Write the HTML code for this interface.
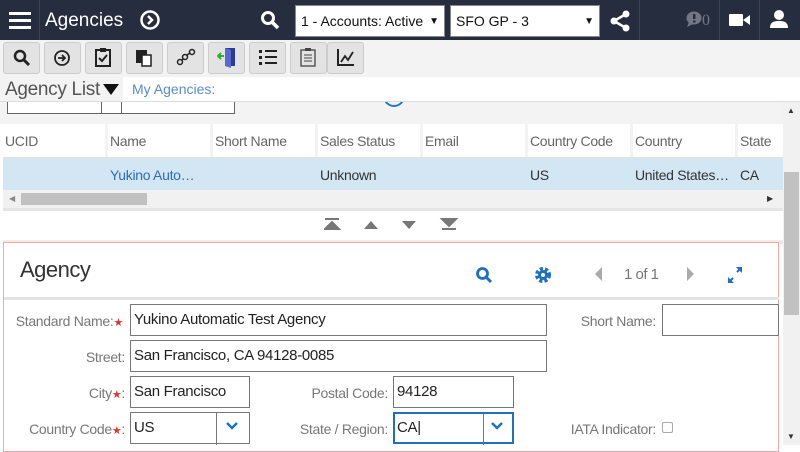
<!DOCTYPE html>
<html><head><style>
*{box-sizing:border-box;margin:0;padding:0}
body{width:800px;height:445px;overflow:hidden;background:#fff;font-family:"Liberation Sans",sans-serif;position:relative}
.a{position:absolute}
.top{left:0;top:0;width:800px;height:40px;background:#262d3e}
.sel{background:#fff;border:1px solid #888;height:32px;top:5px;font-size:14px;color:#111;padding:7px 5px}
.tb{top:40px;left:0;width:800px;height:37px;background:#f3f3f3}
.btn{top:42px;width:37px;height:32px;background:#e3e3e3;border:1px solid #ccc;border-radius:3px}
.th{font-size:14px;color:#666;top:133px;letter-spacing:-.3px}
.td{font-size:14px;color:#333;top:167px;letter-spacing:-.3px}
.lbl{font-size:14px;color:#777;text-align:right;letter-spacing:-.3px}
.inp{border:1px solid #777;height:32px;font-size:15px;color:#222;padding:6px 3px;letter-spacing:-.3px}
.star{color:#d33;font-size:11px}
</style></head><body>
<div class="a top"></div>
<div class="a" style="left:9px;top:12px;width:22px;height:3px;background:#fff;box-shadow:0 7px 0 #fff,0 14px 0 #fff"></div>
<div class="a" style="left:39px;top:0;width:1px;height:40px;background:#3c4455"></div>
<div class="a" style="left:45px;top:10px;color:#fff;font-size:19px">Agencies</div>
<svg class="a" style="left:140px;top:10px" width="20" height="20"><circle cx="10" cy="10" r="8.5" fill="none" stroke="#fff" stroke-width="2.5"/><path d="M8 6l4 4-4 4" fill="none" stroke="#fff" stroke-width="2.5"/></svg>
<svg class="a" style="left:260px;top:10px" width="20" height="20"><circle cx="8" cy="8" r="5.5" fill="none" stroke="#fff" stroke-width="3"/><path d="M12 12l6 6" stroke="#fff" stroke-width="3.5"/></svg>
<div class="a sel" style="left:295px;width:150px">1 - Accounts: Active<span style="position:absolute;right:5px;font-size:10px;top:10px">▼</span></div>
<div class="a sel" style="left:450px;width:150px">SFO GP - 3<span style="position:absolute;right:5px;font-size:10px;top:10px">▼</span></div>
<svg class="a" style="left:609px;top:10px" width="22" height="22"><circle cx="5" cy="11" r="3.5" fill="#fff"/><circle cx="17" cy="4" r="3.5" fill="#fff"/><circle cx="17" cy="18" r="3.5" fill="#fff"/><path d="M5 11L17 4M5 11l12 7" stroke="#fff" stroke-width="2.5"/></svg>
<div class="a" style="left:639px;top:0;width:1px;height:40px;background:#3c4455"></div>
<div class="a" style="left:719px;top:0;width:1px;height:40px;background:#3c4455"></div>
<div class="a" style="left:759px;top:0;width:1px;height:40px;background:#3c4455"></div>
<svg class="a" style="left:686px;top:11px" width="16" height="16"><ellipse cx="8" cy="7" rx="7.5" ry="6.5" fill="#717784"/><path d="M3 11l-2 5 6-3z" fill="#717784"/><rect x="7" y="3" width="2.5" height="5" fill="#262d3e"/><rect x="7" y="9.5" width="2.5" height="2" fill="#262d3e"/></svg>
<div class="a" style="left:702px;top:12px;color:#717784;font-size:16px;font-family:'Liberation Serif',serif">0</div>
<svg class="a" style="left:729px;top:13px" width="22" height="14"><rect x="0" y="1" width="14" height="12" rx="1" fill="#fff"/><path d="M14 7l7-5v10z" fill="#fff"/></svg>
<svg class="a" style="left:769px;top:9px" width="20" height="20"><circle cx="10" cy="6" r="5" fill="#fff"/><path d="M1 19c0-6 4-7 9-7s9 1 9 7z" fill="#fff"/></svg>
<div class="a tb"></div>
<div class="a btn" style="left:3px"></div><div class="a btn" style="left:44px"></div><div class="a btn" style="left:85px"></div><div class="a btn" style="left:126px"></div><div class="a btn" style="left:167px"></div><div class="a btn" style="left:208px"></div><div class="a btn" style="left:249px"></div><div class="a btn" style="left:290px"></div><div class="a btn" style="left:327px;width:37px"></div>
<svg class="a" style="left:13px;top:49px" width="18" height="18"><circle cx="7" cy="7" r="5" fill="none" stroke="#222" stroke-width="2.5"/><path d="M11 11l5 5" stroke="#222" stroke-width="3"/></svg>
<svg class="a" style="left:53px;top:49px" width="18" height="18"><circle cx="9" cy="9" r="7" fill="none" stroke="#222" stroke-width="1.8"/><path d="M5 9h7M9 6l3 3-3 3" fill="none" stroke="#222" stroke-width="1.8"/></svg>
<svg class="a" style="left:94px;top:47px" width="18" height="20"><rect x="2" y="3" width="14" height="16" fill="none" stroke="#222" stroke-width="2"/><rect x="6" y="1" width="6" height="4" fill="#222"/><path d="M5 11l3 3 5-6" fill="none" stroke="#222" stroke-width="2"/></svg>
<svg class="a" style="left:135px;top:47px" width="18" height="20"><rect x="1" y="3" width="11" height="13" fill="#222"/><rect x="7" y="8" width="9" height="11" fill="#fff" stroke="#222" stroke-width="1.5"/></svg>
<svg class="a" style="left:176px;top:48px" width="20" height="18"><circle cx="4" cy="14" r="2.5" fill="none" stroke="#222" stroke-width="1.5"/><circle cx="9" cy="9" r="2.5" fill="none" stroke="#222" stroke-width="1.5"/><circle cx="16" cy="4" r="2.5" fill="none" stroke="#222" stroke-width="1.5"/><path d="M6 12l1-1M11 7l3-2" stroke="#222" stroke-width="1.5"/></svg>
<svg class="a" style="left:217px;top:46px" width="20" height="22"><path d="M8 2h10v18H8z" fill="#2a3a9a"/><path d="M8 2l6 2v18l-6-2z" fill="#5a6acc"/><path d="M1 10h6M4 7l-3 3 3 3" stroke="#3a3" stroke-width="2" fill="none"/></svg>
<svg class="a" style="left:258px;top:48px" width="20" height="18"><path d="M1 2h3v3H1zM1 8h3v3H1zM1 14h3v3H1z" fill="#222"/><path d="M7 3h12M7 9h12M7 15h12" stroke="#222" stroke-width="2"/></svg>
<svg class="a" style="left:300px;top:47px" width="16" height="20"><rect x="1" y="3" width="14" height="16" fill="none" stroke="#444" stroke-width="1.3"/><rect x="5" y="1" width="6" height="3" fill="#444"/><path d="M4 8h8M4 11h8M4 14h8" stroke="#444"/></svg>
<svg class="a" style="left:337px;top:48px" width="18" height="18"><path d="M1 1v16h16" fill="none" stroke="#222" stroke-width="2"/><path d="M4 14l4-6 3 4 5-8" fill="none" stroke="#222" stroke-width="1.8"/></svg>
<div class="a" style="left:0;top:102px;width:783px;height:22px;background:#f3f3f3"></div>
<div class="a" style="left:7px;top:100px;width:228px;height:14px;border:1px solid #666;border-top:none;background:#fff"></div>
<div class="a" style="left:101px;top:100px;width:1px;height:14px;background:#666"></div>
<div class="a" style="left:121px;top:100px;width:1px;height:14px;background:#666"></div>
<div class="a" style="left:383px;top:96px;width:22px;height:11px;border:2px solid #2874c8;border-top:none;border-radius:0 0 11px 11px"></div>
<div class="a" style="left:0;top:77px;width:123px;height:24px;background:#f3f3f3"></div>
<div class="a" style="left:123px;top:77px;width:677px;height:24px;background:#fff"></div>
<div class="a" style="left:5px;top:79px;font-size:19px;color:#555;letter-spacing:-.3px">Agency List</div>
<div class="a" style="left:103px;top:84px;width:0;height:0;border-left:8px solid transparent;border-right:8px solid transparent;border-top:11px solid #111"></div>
<div class="a" style="left:132px;top:81px;font-size:14px;color:#5a8bd0">My Agencies:</div>
<div class="a" style="left:0;top:101px;width:800px;height:1px;background:#ddd"></div>
<div class="a" style="left:3px;top:124px;width:780px;height:33px;background:#fff"></div>
<div class="a" style="left:3px;top:124px;width:780px;height:33px;background:repeating-linear-gradient(90deg,transparent 0,transparent 102px,#f3f3f3 102px,#f3f3f3 105px)"></div>
<div class="a th" style="left:5px">UCID</div><div class="a th" style="left:110px">Name</div><div class="a th" style="left:215px">Short Name</div><div class="a th" style="left:320px">Sales Status</div><div class="a th" style="left:425px">Email</div><div class="a th" style="left:530px">Country Code</div><div class="a th" style="left:635px">Country</div><div class="a th" style="left:740px">State</div>
<div class="a" style="left:3px;top:157px;width:780px;height:33px;background:#d3e6f3;border-top:2px solid #e3e3e3"></div>
<div class="a td" style="left:110px;color:#2d6cb8">Yukino Auto…</div><div class="a td" style="left:320px">Unknown</div><div class="a td" style="left:530px">US</div><div class="a td" style="left:635px">United States…</div><div class="a td" style="left:740px">CA</div>
<div class="a" style="left:3px;top:190px;width:780px;height:18px;background:#f1f1f1"></div>
<div class="a" style="left:21px;top:193px;width:126px;height:12px;background:#c1c1c1"></div>
<div class="a" style="left:9px;top:194px;font-size:8px;color:#888">◀</div>
<div class="a" style="left:767px;top:194px;font-size:8px;color:#333">▶</div>
<div class="a" style="left:3px;top:208px;width:780px;height:3px;background:#e5e5e5"></div>
<svg class="a" style="left:324px;top:218px" width="140" height="12"><path d="M1 1h14M1 11l7-7 7 7z" stroke="#777" stroke-width="2" fill="#777"/><path d="M40 11l7-8 7 8z" fill="#777"/><path d="M78 3l7 8 7-8z" fill="#777"/><path d="M118 1l7 7 7-7zM118 11h14" stroke="#777" stroke-width="2" fill="#777"/></svg>
<div class="a" style="left:3px;top:240px;width:780px;height:4px;background:#f6e9e9"></div>
<div class="a" style="left:3px;top:242px;width:776px;height:210px;border:1px solid #f0a8a8;background:#fff"></div>
<div class="a" style="left:20px;top:257px;font-size:22px;color:#333;letter-spacing:-.5px">Agency</div>
<svg class="a" style="left:475px;top:266px" width="20" height="20"><circle cx="7.5" cy="7.5" r="5" fill="none" stroke="#1f6fc2" stroke-width="2.8"/><path d="M11 11l5 5" stroke="#1f6fc2" stroke-width="3"/></svg>
<svg class="a" style="left:533px;top:265px" width="20" height="20"><circle cx="10" cy="10" r="6" fill="none" stroke="#1f6fc2" stroke-width="4" stroke-dasharray="3 2"/><circle cx="10" cy="10" r="5" fill="#1f6fc2"/><circle cx="10" cy="10" r="2" fill="#fff"/></svg>
<svg class="a" style="left:594px;top:267px" width="10" height="14"><path d="M8 0L1 7l7 7z" fill="#aaa"/></svg>
<div class="a" style="left:624px;top:266px;font-size:15px;color:#777;letter-spacing:-.5px">1 of 1</div>
<svg class="a" style="left:686px;top:267px" width="10" height="14"><path d="M1 0l7 7-7 7z" fill="#aaa"/></svg>
<svg class="a" style="left:725px;top:265px" width="20" height="20"><path d="M11 2h6v6zM9 18H3v-6z" fill="#1f6fc2"/><path d="M16 3l-4 4M4 17l4-4" stroke="#1f6fc2" stroke-width="2"/></svg>
<div class="a" style="left:4px;top:297px;width:775px;height:3px;background:#e3e3e3"></div>
<div class="a lbl" style="left:0;top:313px;width:123px">Standard Name:<span class="star">★</span></div>
<div class="a inp" style="left:130px;top:304px;width:417px">Yukino Automatic Test Agency</div>
<div class="a lbl" style="left:540px;top:313px;width:116px">Short Name:</div>
<div class="a inp" style="left:662px;top:304px;width:117px"></div>
<div class="a lbl" style="left:0;top:349px;width:125px">Street:</div>
<div class="a inp" style="left:130px;top:340px;width:417px">San Francisco, CA 94128-0085</div>
<div class="a lbl" style="left:0;top:385px;width:125px">City<span class="star">★</span>:</div>
<div class="a inp" style="left:130px;top:376px;width:120px">San Francisco</div>
<div class="a lbl" style="left:260px;top:385px;width:128px">Postal Code:</div>
<div class="a inp" style="left:393px;top:376px;width:121px">94128</div>
<div class="a lbl" style="left:0;top:421px;width:125px">Country Code<span class="star">★</span>:</div>
<div class="a inp" style="left:130px;top:412px;width:120px">US</div>
<div class="a" style="left:216px;top:412px;width:1px;height:33px;background:#777"></div>
<svg class="a" style="left:225px;top:421px" width="14" height="10"><path d="M2 2l5 5 5-5" fill="none" stroke="#1f6fc2" stroke-width="2.5"/></svg>
<div class="a lbl" style="left:260px;top:421px;width:128px">State / Region:</div>
<div class="a inp" style="left:393px;top:412px;width:121px;border:2px solid #1f6fc2;padding:5px 2px">CA|</div>
<div class="a" style="left:483px;top:414px;width:1px;height:31px;background:#777"></div>
<svg class="a" style="left:490px;top:421px" width="14" height="10"><path d="M2 2l5 5 5-5" fill="none" stroke="#1f6fc2" stroke-width="2.5"/></svg>
<div class="a lbl" style="left:540px;top:421px;width:116px">IATA Indicator:</div>
<div class="a" style="left:662px;top:422px;width:11px;height:11px;border:1px solid #aaa;border-radius:2px"></div>
<div class="a" style="left:783px;top:102px;width:17px;height:343px;background:#f1f1f1"></div>
<div class="a" style="left:784px;top:172px;width:15px;height:143px;background:#c1c1c1"></div>
<div class="a" style="left:787px;top:106px;font-size:8px;color:#333">▲</div>
<div class="a" style="left:787px;top:432px;font-size:8px;color:#333">▼</div>
</body></html>
